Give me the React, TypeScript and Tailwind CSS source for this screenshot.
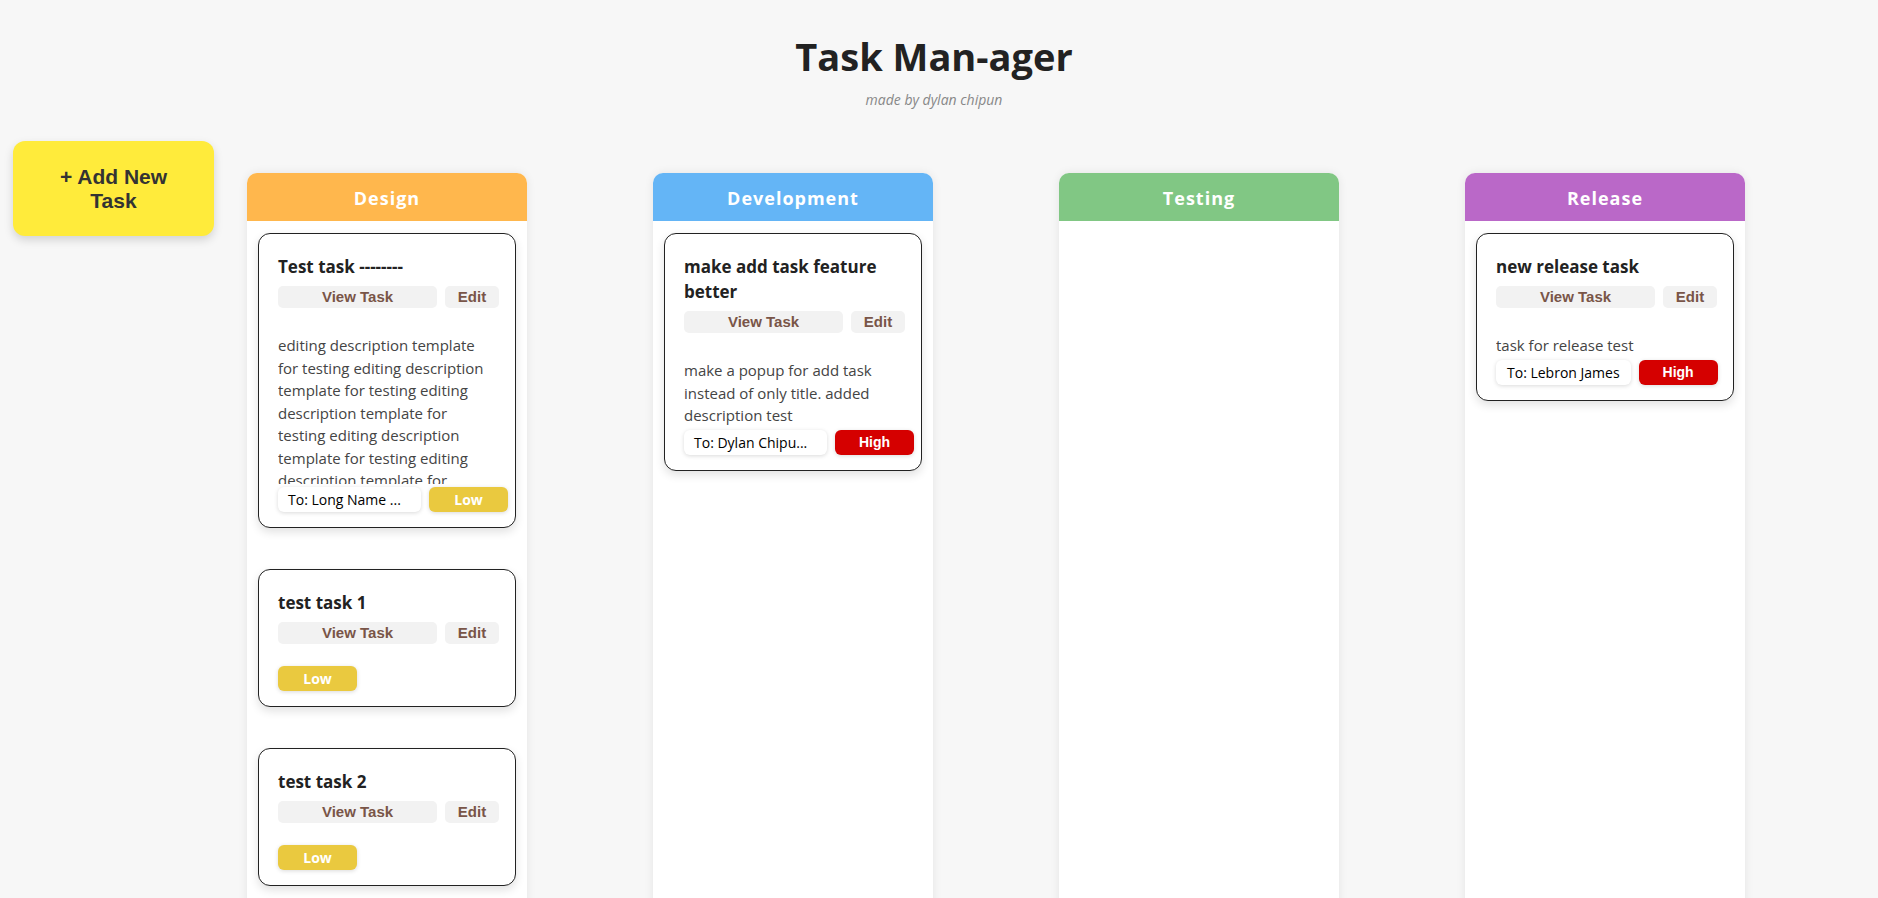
import React from "react";

type Task = {
  title: string;
  desc?: string;
  to?: string;
  toWide?: boolean;
  priority: "Low" | "High";
};

type Column = {
  name: string;
  color: string;
  tasks: Task[];
};

const longDesc =
  "editing description template for testing editing description template for testing editing description template for testing editing description template for testing editing description template for testing editing description template for testing";

const columns: Column[] = [
  {
    name: "Design",
    color: "bg-[#ffb74d]",
    tasks: [
      { title: "Test task --------", desc: longDesc, to: "To: Long Name ...", toWide: true, priority: "Low" },
      { title: "test task 1", priority: "Low" },
      { title: "test task 2", priority: "Low" },
    ],
  },
  {
    name: "Development",
    color: "bg-[#64b5f6]",
    tasks: [
      {
        title: "make add task feature better",
        desc: "make a popup for add task instead of only title. added description test",
        to: "To: Dylan Chipu...",
        toWide: true,
        priority: "High",
      },
    ],
  },
  { name: "Testing", color: "bg-[#81c784]", tasks: [] },
  {
    name: "Release",
    color: "bg-[#ba68c8]",
    tasks: [
      { title: "new release task", desc: "task for release test", to: "To: Lebron James", priority: "High" },
    ],
  },
];

function Card({ task }: { task: Task }) {
  return (
    <div className="rounded-[12px] border border-[#222] bg-white pb-[15px] pl-[19px] pr-[16px] pt-[20px] shadow-[0_4px_10px_rgba(0,0,0,0.12)]">
      <h3 className="text-[17px] font-bold leading-[25px] text-[#222]">{task.title}</h3>
      <div className="mt-[7px] flex gap-[8px] font-['Liberation_Sans',Arial,sans-serif]">
        <button className="h-[22px] w-[159px] shrink-0 rounded-[5px] bg-[#f2f2f2] text-[15px] font-bold text-[#795548]">
          View Task
        </button>
        <button className="h-[22px] w-[54px] shrink-0 rounded-[5px] bg-[#f2f2f2] text-[15px] font-bold text-[#795548]">
          Edit
        </button>
      </div>
      {task.desc && (
        <p className="mr-[5px] mt-[26px] max-h-[150px] overflow-hidden text-[15px] leading-[22.5px] text-[#444]">
          {task.desc}
        </p>
      )}
      <div className={task.desc ? "mt-[3px] flex gap-[8px]" : "mt-[22px] flex gap-[8px]"}>
        {task.to && (
          <span
            className={
              task.toWide
                ? "h-[25px] w-[143px] shrink-0 overflow-hidden whitespace-nowrap rounded-[6px] bg-white pl-[10px] text-[14px] leading-[25px] text-black shadow-[0_1px_4px_rgba(0,0,0,0.15)]"
                : "h-[25px] shrink-0 whitespace-nowrap rounded-[6px] bg-white px-[11px] text-[14px] leading-[25px] text-black shadow-[0_1px_4px_rgba(0,0,0,0.15)]"
            }
          >
            {task.to}
          </span>
        )}
        <span
          className={
            task.priority === "High"
              ? "h-[25px] w-[79px] shrink-0 rounded-[6px] bg-[#d50000] text-center font-['Liberation_Sans',Arial,sans-serif] text-[14px] font-bold leading-[25px] text-white shadow-[0_1px_4px_rgba(0,0,0,0.15)]"
              : "h-[25px] w-[79px] shrink-0 rounded-[6px] bg-[#eac93f] text-center text-[14px] font-bold leading-[25px] text-white shadow-[0_1px_4px_rgba(0,0,0,0.15)]"
          }
        >
          {task.priority}
        </span>
      </div>
    </div>
  );
}

export default function App() {
  return (
    <div className="min-h-screen bg-[#f7f7f7] font-['Open_Sans',sans-serif]">
      <header className="pr-[10px] pt-[33px] text-center">
        <h1 className="text-[38px] font-bold leading-[46px] text-[#222]">Task Man-ager</h1>
        <p className="mt-[11px] text-[14px] italic leading-[20px] text-[#888]">made by dylan chipun</p>
      </header>
      <div className="mt-[31px] flex items-start pl-[13px]">
        <button className="h-[95px] w-[201px] shrink-0 rounded-[12px] bg-[#ffeb3b] px-[36px] font-['Liberation_Sans',Arial,sans-serif] text-[21px] font-bold leading-[24px] text-[#333] shadow-[0_4px_10px_rgba(0,0,0,0.15)]">
          + Add New Task
        </button>
        <div className="ml-[33px] mt-[32px] flex gap-[126px]">
          {columns.map((col) => (
            <div
              key={col.name}
              className="min-h-[760px] w-[280px] shrink-0 rounded-t-[10px] bg-white shadow-[0_0_10px_rgba(0,0,0,0.08)]"
            >
              <div
                className={`${col.color} flex h-[48px] items-center justify-center rounded-t-[10px] pt-[2px] text-[18px] font-bold tracking-[1px] text-white`}
              >
                {col.name}
              </div>
              <div className="flex flex-col gap-[41px] px-[11px] pt-[12px]">
                {col.tasks.map((t) => (
                  <Card key={t.title} task={t} />
                ))}
              </div>
            </div>
          ))}
        </div>
      </div>
    </div>
  );
}
